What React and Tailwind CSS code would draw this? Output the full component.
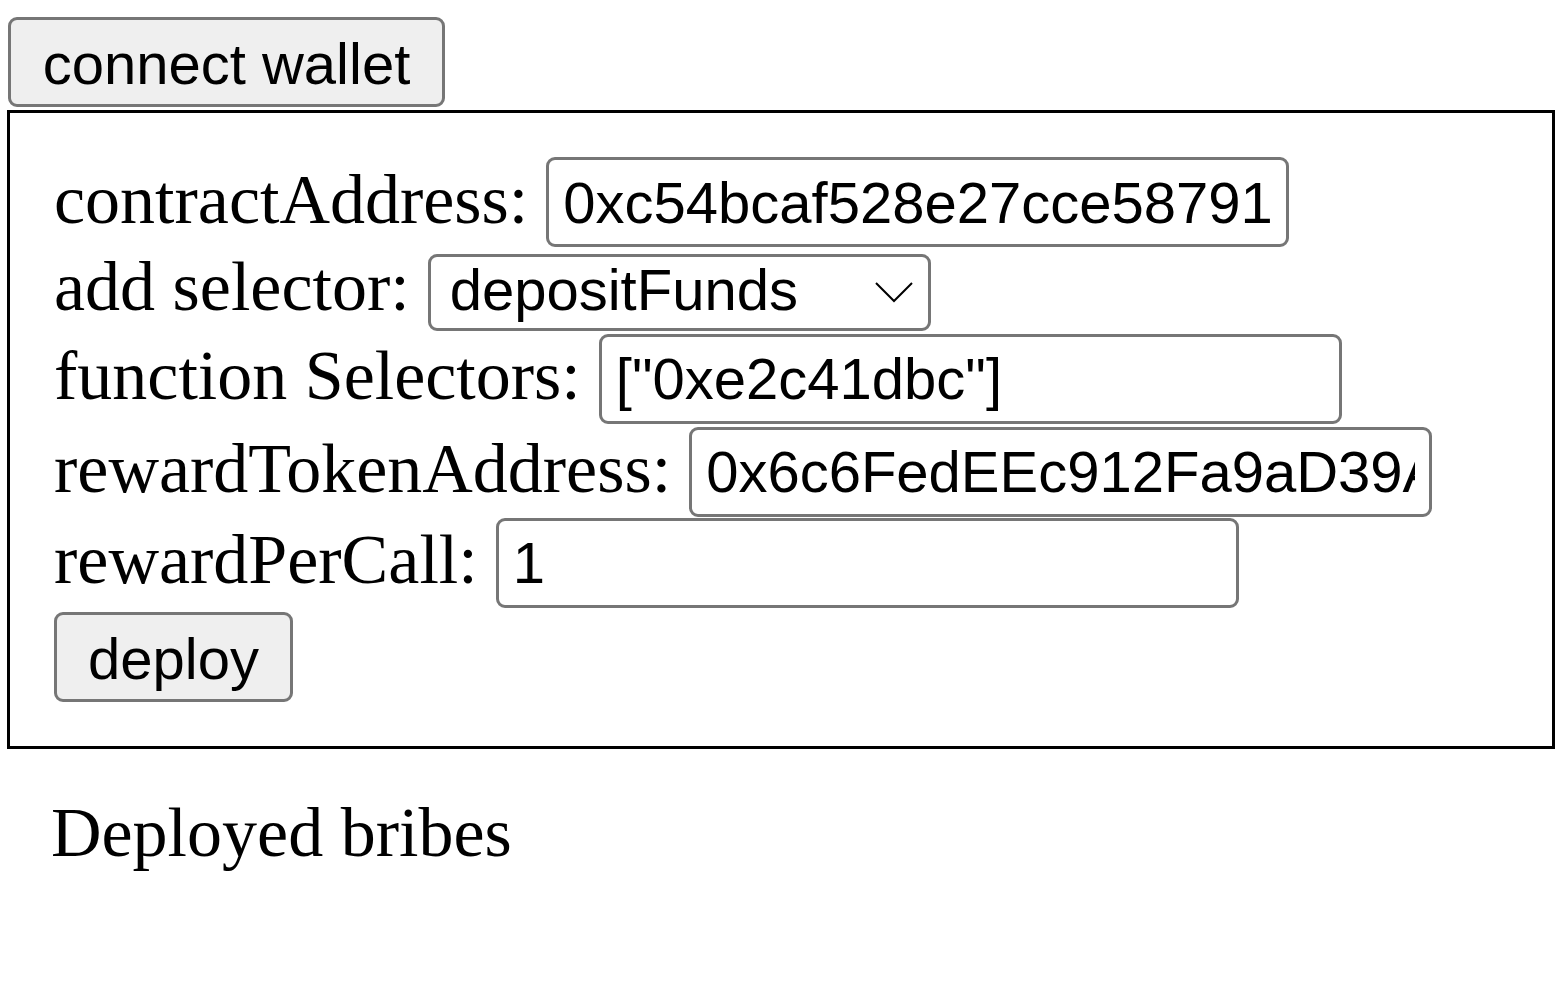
import React from 'react'

const labelCls = "font-['Liberation_Serif','Times_New_Roman',serif] text-[70px] leading-[80px] text-black whitespace-nowrap"
const fieldCls =
  "h-[90px] w-[743px] rounded-[9px] border-[3px] border-[#767676] bg-white px-[14px] font-['Liberation_Sans',Arial,sans-serif] text-[58px] leading-normal text-black outline-none"
const buttonCls =
  "h-[90px] rounded-[9px] border-[3px] border-[#767676] bg-[#efefef] font-['Liberation_Sans',Arial,sans-serif] text-[58px] leading-normal text-black"

function Row({ label, children, className = '' }) {
  return (
    <div className={`flex items-baseline gap-[18px] ${className}`}>
      <span className={labelCls}>{label}</span>
      {children}
    </div>
  )
}

export default function App() {
  return (
    <div className="min-h-screen bg-white pt-[17px]">
      <button className={`${buttonCls} ml-[8px] w-[437px]`}>connect wallet</button>

      <div className="mt-[3px] ml-[7px] w-[1548px] border-[3px] border-black p-[44px]">
        <Row label="contractAddress:">
          <input className={fieldCls} defaultValue="0xc54bcaf528e27cce58791" />
        </Row>

        <Row label="add selector:">
          {/* select drawn as a box so the text sits where the native one does */}
          <div className="flex h-[77px] w-[503px] items-center justify-between rounded-[9px] border-[3px] border-[#767676] bg-white pb-[5px] pl-[19px] pr-[15px] font-['Liberation_Sans',Arial,sans-serif] text-[58px] leading-normal text-black">
            <span>depositFunds</span>
            <svg width="38" height="21" viewBox="0 0 38 21" fill="none" className="mt-[5px]">
              <polyline points="1,1 19,19 37,1" stroke="#000" strokeWidth="2" />
            </svg>
          </div>
        </Row>

        <Row label="function Selectors:" className="mt-[3px]">
          <input className={fieldCls} defaultValue={'["0xe2c41dbc"]'} />
        </Row>

        <Row label="rewardTokenAddress:" className="mt-[3px]">
          <input className={fieldCls} defaultValue="0x6c6FedEEc912Fa9aD39A0e4D8b7a2C51f3E9B6d0" />
        </Row>

        <Row label="rewardPerCall:" className="mt-[1px]">
          <input className={fieldCls} defaultValue="1" />
        </Row>

        <button className={`${buttonCls} mt-[4px] w-[239px]`}>deploy</button>
      </div>

      <div className="mt-[44px] ml-[51px] font-['Liberation_Serif','Times_New_Roman',serif] text-[70px] leading-[80px] text-black">
        Deployed bribes
      </div>
    </div>
  )
}
